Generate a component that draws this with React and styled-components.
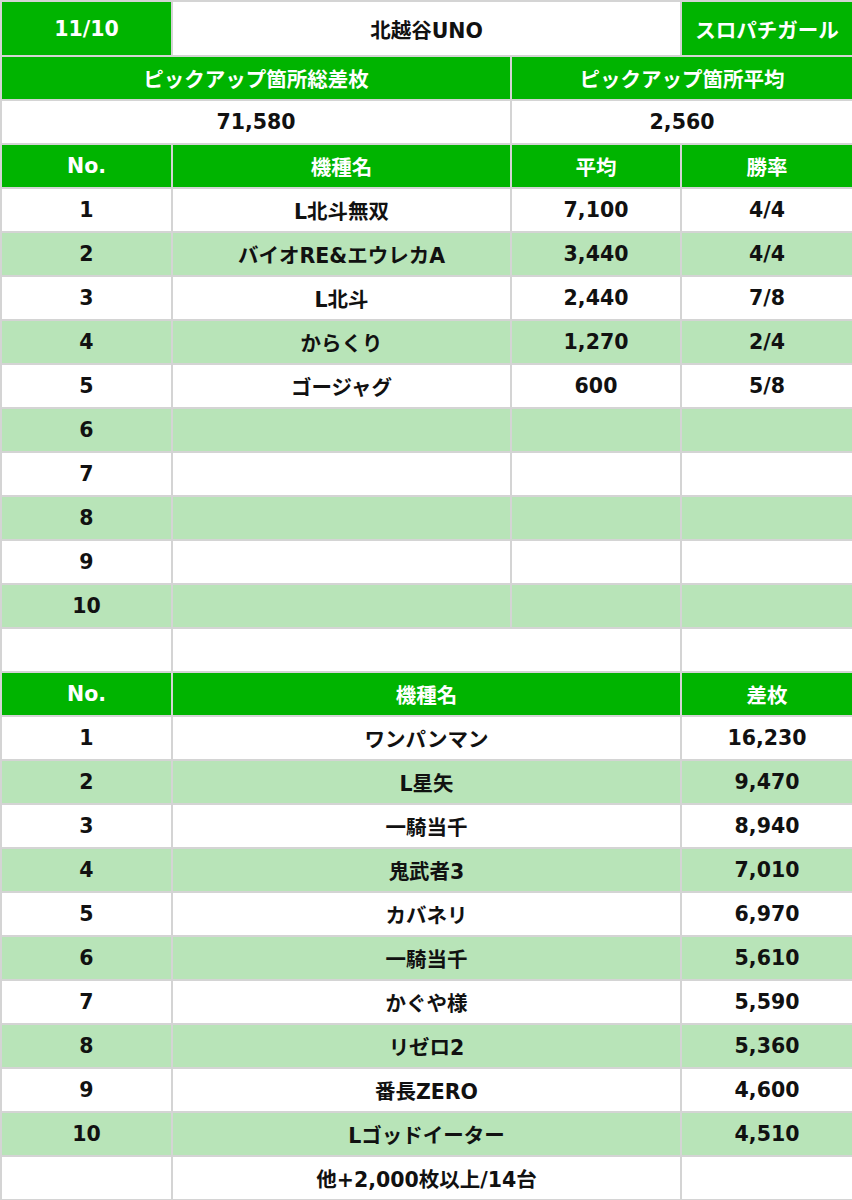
import React from "react";
import styled, { createGlobalStyle } from "styled-components";

const GlobalStyle = createGlobalStyle`
  body {
    margin: 0;
    background: #fff;
    font-family: "DejaVu Sans", "Noto Sans CJK JP", sans-serif;
  }
`;

const pickup = [
  { no: 1, name: "L北斗無双", avg: "7,100", win: "4/4" },
  { no: 2, name: "バイオRE&エウレカA", avg: "3,440", win: "4/4" },
  { no: 3, name: "L北斗", avg: "2,440", win: "7/8" },
  { no: 4, name: "からくり", avg: "1,270", win: "2/4" },
  { no: 5, name: "ゴージャグ", avg: "600", win: "5/8" },
  { no: 6 },
  { no: 7 },
  { no: 8 },
  { no: 9 },
  { no: 10 },
];

const ranking = [
  { no: 1, name: "ワンパンマン", diff: "16,230" },
  { no: 2, name: "L星矢", diff: "9,470" },
  { no: 3, name: "一騎当千", diff: "8,940" },
  { no: 4, name: "鬼武者3", diff: "7,010" },
  { no: 5, name: "カバネリ", diff: "6,970" },
  { no: 6, name: "一騎当千", diff: "5,610" },
  { no: 7, name: "かぐや様", diff: "5,590" },
  { no: 8, name: "リゼロ2", diff: "5,360" },
  { no: 9, name: "番長ZERO", diff: "4,600" },
  { no: 10, name: "Lゴッドイーター", diff: "4,510" },
];

const Table = styled.table`
  width: 852px;
  border-collapse: collapse;
  table-layout: fixed;
  font-size: 20.5px;
  font-weight: bold;
`;

const Row = styled.tr`
  height: ${(p) => (p.$tall ? 55 : 44)}px;
  background: ${(p) => (p.$alt ? "#b8e4b8" : "#fff")};
`;

const Cell = styled.td`
  border: 2px solid #d4d4d4;
  padding: 0;
  text-align: center;
  vertical-align: middle;
  color: ${(p) => (p.$head ? "#fff" : "#111")};
  background: ${(p) => (p.$head ? "#00b400" : "transparent")};
  white-space: nowrap;
  overflow: hidden;
`;

export default function App() {
  return (
    <>
      <GlobalStyle />
      <Table>
        <colgroup>
          <col style={{ width: 171 }} />
          <col style={{ width: 339 }} />
          <col style={{ width: 170 }} />
          <col style={{ width: 172 }} />
        </colgroup>
        <tbody>
          <Row $tall>
            <Cell $head>11/10</Cell>
            <Cell colSpan={2}>北越谷UNO</Cell>
            <Cell $head>スロパチガール</Cell>
          </Row>
          <Row>
            <Cell $head colSpan={2}>ピックアップ箇所総差枚</Cell>
            <Cell $head colSpan={2}>ピックアップ箇所平均</Cell>
          </Row>
          <Row>
            <Cell colSpan={2}>71,580</Cell>
            <Cell colSpan={2}>2,560</Cell>
          </Row>
          <Row>
            <Cell $head>No.</Cell>
            <Cell $head>機種名</Cell>
            <Cell $head>平均</Cell>
            <Cell $head>勝率</Cell>
          </Row>
          {pickup.map((r) => (
            <Row key={r.no} $alt={r.no % 2 === 0}>
              <Cell>{r.no}</Cell>
              <Cell>{r.name}</Cell>
              <Cell>{r.avg}</Cell>
              <Cell>{r.win}</Cell>
            </Row>
          ))}
          <Row>
            <Cell />
            <Cell colSpan={2} />
            <Cell />
          </Row>
          <Row>
            <Cell $head>No.</Cell>
            <Cell $head colSpan={2}>機種名</Cell>
            <Cell $head>差枚</Cell>
          </Row>
          {ranking.map((r) => (
            <Row key={r.no} $alt={r.no % 2 === 0}>
              <Cell>{r.no}</Cell>
              <Cell colSpan={2}>{r.name}</Cell>
              <Cell>{r.diff}</Cell>
            </Row>
          ))}
          <Row>
            <Cell />
            <Cell colSpan={2}>他+2,000枚以上/14台</Cell>
            <Cell />
          </Row>
        </tbody>
      </Table>
    </>
  );
}
